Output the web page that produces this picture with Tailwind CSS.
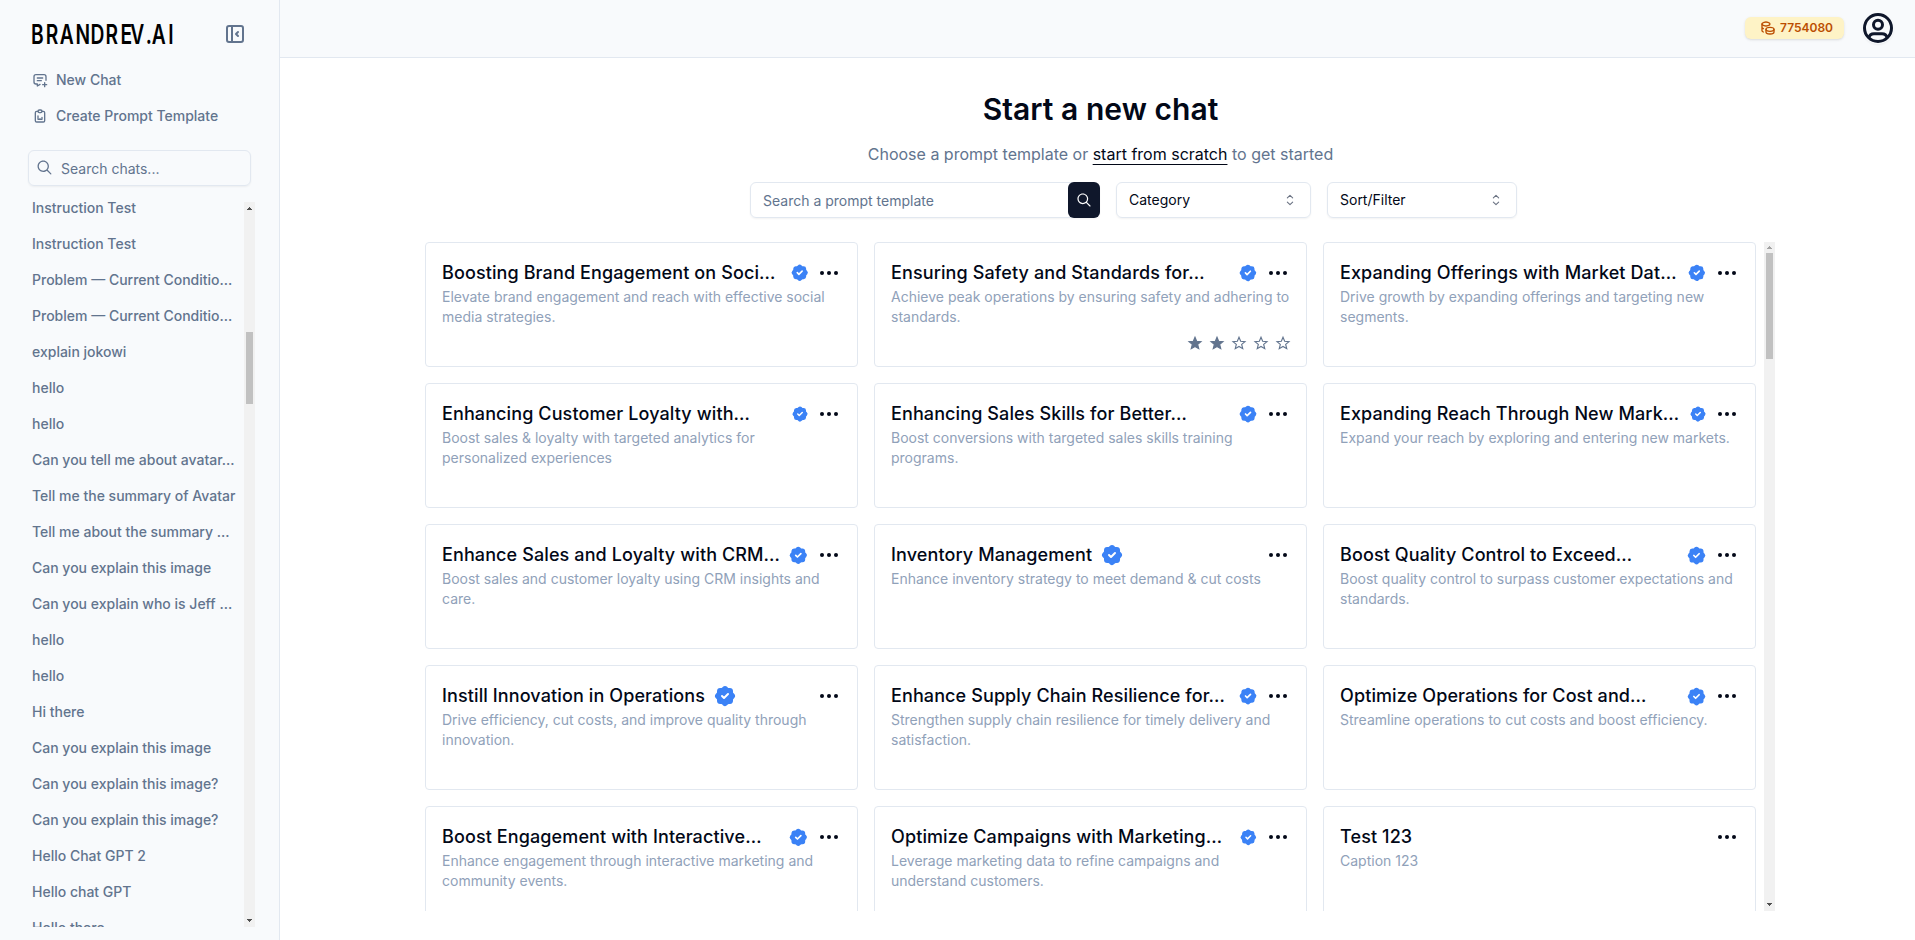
<!DOCTYPE html>
<html lang="en">
<head>
<meta charset="utf-8">
<title>BrandRev.AI</title>
<script src="https://cdn.jsdelivr.net/npm/@tailwindcss/browser@4"></script>
</head>
<body class="flex h-[940px] w-[1915px] overflow-hidden bg-white font-['Inter',sans-serif] text-[#020817]">
<svg class="hidden">
  <symbol id="search" viewBox="0 0 15 15"><path fill="currentColor" fill-rule="evenodd" d="M10 6.5C10 8.433 8.433 10 6.5 10C4.567 10 3 8.433 3 6.5C3 4.567 4.567 3 6.5 3C8.433 3 10 4.567 10 6.5ZM9.30884 10.0159C8.53901 10.6318 7.56251 11 6.5 11C4.01472 11 2 8.98528 2 6.5C2 4.01472 4.01472 2 6.5 2C8.98528 2 11 4.01472 11 6.5C11 7.56251 10.6318 8.53901 10.0159 9.30884L12.8536 12.1464C13.0488 12.3417 13.0488 12.6583 12.8536 12.8536C12.6583 13.0488 12.3417 13.0488 12.1464 12.8536L9.30884 10.0159Z"/></symbol>
  <symbol id="caret" viewBox="0 0 15 15"><path fill="none" stroke="currentColor" stroke-linecap="round" stroke-linejoin="round" d="M5 5.6L7.5 3.1L10 5.6M5 9.4L7.5 11.9L10 9.4"/></symbol>
  <symbol id="dots" viewBox="0 0 24 24"><g fill="currentColor"><circle cx="5" cy="12" r="2"/><circle cx="12" cy="12" r="2"/><circle cx="19" cy="12" r="2"/></g></symbol>
  <symbol id="badge" viewBox="0 0 24 24"><path fill="#3b82f6" d="M12.01 2.011a3.2 3.2 0 0 1 2.113 .797l.154 .145l.698 .698a1.2 1.2 0 0 0 .71 .341l.135 .008h1a3.2 3.2 0 0 1 3.195 3.018l.005 .182v1c0 .27 .092 .533 .258 .743l.09 .1l.697 .698a3.2 3.2 0 0 1 .147 4.382l-.145 .154l-.698 .698a1.2 1.2 0 0 0 -.341 .71l-.008 .135v1a3.2 3.2 0 0 1 -3.018 3.195l-.182 .005h-1a1.2 1.2 0 0 0 -.743 .258l-.1 .09l-.698 .697a3.2 3.2 0 0 1 -4.382 .147l-.154 -.145l-.698 -.698a1.2 1.2 0 0 0 -.71 -.341l-.135 -.008h-1a3.2 3.2 0 0 1 -3.195 -3.018l-.005 -.182v-1a1.2 1.2 0 0 0 -.258 -.743l-.09 -.1l-.697 -.698a3.2 3.2 0 0 1 -.147 -4.382l.145 -.154l.698 -.698a1.2 1.2 0 0 0 .341 -.71l.008 -.135v-1l.005 -.182a3.2 3.2 0 0 1 3.013 -3.013l.182 -.005h1a1.2 1.2 0 0 0 .743 -.258l.1 -.09l.698 -.697a3.2 3.2 0 0 1 2.269 -.944z"/><path fill="none" stroke="#fff" stroke-width="2" stroke-linecap="round" stroke-linejoin="round" d="M9 12l2 2l4-4"/></symbol>
  <symbol id="star" viewBox="0 0 24 24"><path stroke="currentColor" stroke-width="1.7" stroke-linejoin="miter" d="M12 3.4l2.5 6 6.5.5-5 4.2 1.6 6.4-5.6-3.4-5.6 3.4 1.6-6.4-5-4.2 6.5-.5z"/></symbol>
  <symbol id="up" viewBox="0 0 11 11"><path fill="currentColor" shape-rendering="crispEdges" d="M5 4h1v1h1v1h1v1H3V6h1V5h1z"/></symbol>
  <symbol id="down" viewBox="0 0 11 11"><path fill="currentColor" shape-rendering="crispEdges" d="M3 4h5v1H7v1H6v1H5V6H4V5H3z"/></symbol>
</svg>

<aside class="flex h-full w-[280px] shrink-0 flex-col border-r border-slate-200 bg-slate-50 text-sm text-slate-500">
  <div class="flex h-[62px] shrink-0 items-start justify-between pt-[21px] pr-8 pl-8">
    <svg class="h-8 w-[144px] overflow-visible text-black" viewBox="0 0 144 32"><g transform="scale(.7 1)"><text y="23" font-family="Inter" font-size="27.5" font-weight="600" fill="currentColor" x="-1.5 19.8 39.5 62 83.5 105 126.5 140.5 162.5 171 194.5">BRANDREV.AI</text></g></svg>
    <svg class="mt-px h-6 w-6" viewBox="0 0 24 24" fill="none" stroke="currentColor" stroke-width="2" stroke-linecap="round" stroke-linejoin="round"><rect x="4" y="4" width="16" height="16" rx="2"/><path d="M9 4v16M15 10l-2 2 2 2"/></svg>
  </div>
  <div class="flex h-9 shrink-0 items-center gap-2 pl-8 font-medium">
    <svg class="h-4 w-4" viewBox="0 0 24 24" fill="none" stroke="currentColor" stroke-width="2" stroke-linecap="round" stroke-linejoin="round"><path d="M8 9h8M8 13h6M12.01 18.6L8 21v-3H6a3 3 0 0 1-3-3V7a3 3 0 0 1 3-3h12a3 3 0 0 1 3 3v5.5M16 19h6M19 16v6"/></svg>
    <span>New Chat</span>
  </div>
  <div class="flex h-9 shrink-0 items-center gap-2 pl-8 font-medium">
    <svg class="h-4 w-4" viewBox="0 0 24 24" fill="none" stroke="currentColor" stroke-width="2" stroke-linecap="round" stroke-linejoin="round"><path d="M9 5H7a2 2 0 0 0-2 2v12a2 2 0 0 0 2 2h10a2 2 0 0 0 2-2V7a2 2 0 0 0-2-2h-2"/><rect x="9" y="3" width="6" height="4" rx="2"/><path d="M9 12v5M12 16v1M15 14v3M9 17h6"/></svg>
    <span>Create Prompt Template</span>
  </div>
  <div class="mt-4 ml-7 flex h-9 w-[223px] shrink-0 items-center rounded-md border border-slate-200 pl-1.5 shadow-xs">
    <svg class="-mt-0.5 h-[19px] w-[19px]"><use href="#search"/></svg>
    <span class="ml-[7px] pt-0.5">Search chats...</span>
  </div>
  <div class="mt-4 flex h-[725px] shrink-0 overflow-hidden pl-8">
    <div id="chats" class="-mt-3 w-[212px] shrink-0 font-medium"></div>
    <div class="flex h-full w-[11px] flex-col bg-[#f1f1f1] text-[#505050]">
      <svg class="mt-px h-[11px] w-[11px]"><use href="#up"/></svg>
      <div class="mx-auto mt-[118px] h-[72px] w-[7px] bg-[#c1c1c1]"></div>
      <svg class="mt-auto mb-px h-[11px] w-[11px]"><use href="#down"/></svg>
    </div>
  </div>
</aside>

<main class="flex min-w-0 flex-1 flex-col">
  <header class="flex h-[58px] shrink-0 items-center justify-end gap-[18px] border-b border-slate-200 bg-slate-50 pr-[21px]">
    <div class="mb-px flex h-[22px] w-[99px] items-center rounded-md bg-amber-100 pl-[15px] text-xs font-semibold text-amber-700 shadow-sm">
      <svg class="mr-1 h-4 w-4" viewBox="0 0 24 24" fill="none" stroke="currentColor" stroke-width="2" stroke-linecap="round" stroke-linejoin="round"><path d="M9 14c0 1.657 2.686 3 6 3s6-1.343 6-3-2.686-3-6-3-6 1.343-6 3z"/><path d="M9 14v4c0 1.656 2.686 3 6 3s6-1.344 6-3v-4M3 6c0 1.072 1.144 2.062 3 2.598s4.144.536 6 0c1.856-.536 3-1.526 3-2.598s-1.144-2.062-3-2.598-4.144-.536-6 0C4.144 3.938 3 4.928 3 6z"/><path d="M3 6v10c0 .888.772 1.45 2 2M3 11c0 .888.772 1.45 2 2"/></svg>
      <span>7754080</span>
    </div>
    <div class="mb-px h-8 w-8 rounded-full shadow-xs">
      <svg class="h-8 w-8 text-slate-900" viewBox="-16 -16 32 32" fill="none" stroke="currentColor" stroke-width="3"><circle r="13.5"/><circle cy="-3.2" r="4.5"/><path d="M-9.3 9.8C-8.4 6.6-6.6 5.7-4 5.7H4C6.6 5.7 8.4 6.6 9.3 9.8"/></svg>
    </div>
  </header>
  <section class="ml-[145px] flex w-[1351px] flex-col pt-[33px]">
    <h1 class="text-center text-3xl leading-9 font-semibold tracking-[0.05px]">Start a new chat</h1>
    <p class="mt-[15px] text-center text-base leading-6 text-slate-500">Choose a prompt template or <span class="text-[#020817] underline underline-offset-4">start from scratch</span> to get started</p>
    <div class="mt-4 ml-[325px] flex h-9 gap-4 text-sm">
      <div class="flex w-[350px] items-center justify-between rounded-md border border-slate-200 pl-3 text-slate-500 shadow-xs">
        <span class="pt-0.5">Search a prompt template</span>
        <div class="-my-px -mr-px flex h-9 w-8 items-center justify-center rounded-md bg-slate-900 text-white"><svg class="h-[18px] w-[18px]"><use href="#search"/></svg></div>
      </div>
      <div class="flex w-[195px] items-center justify-between rounded-md border border-slate-200 pr-3 pl-3 shadow-xs"><span>Category</span><svg class="h-4 w-4 text-gray-500"><use href="#caret"/></svg></div>
      <div class="flex w-[190px] items-center justify-between rounded-md border border-slate-200 pr-3 pl-3 shadow-xs"><span>Sort/Filter</span><svg class="h-4 w-4 text-gray-500"><use href="#caret"/></svg></div>
    </div>
    <div class="mt-6 flex h-[669px] gap-2 overflow-hidden">
      <div id="cards" class="grid w-[1331px] shrink-0 auto-rows-[125px] grid-cols-3 gap-4"></div>
      <div class="flex h-full w-[11px] flex-col bg-[#f1f1f1] text-[#505050]">
        <svg class="h-[11px] w-[11px] text-[#a3a3a3]"><use href="#up"/></svg>
        <div class="mx-auto h-[106px] w-[7px] bg-[#c1c1c1]"></div>
        <svg class="mt-auto mb-px h-[11px] w-[11px]"><use href="#down"/></svg>
      </div>
    </div>
  </section>
</main>

<script>
const chats = ["Instruction Test","Instruction Test","Problem — Current Conditio…","Problem — Current Conditio…","explain jokowi","hello","hello","Can you tell me about avatar…","Tell me the summary of Avatar","Tell me about the summary …","Can you explain this image","Can you explain who is Jeff …","hello","hello","Hi there","Can you explain this image","Can you explain this image?","Can you explain this image?","Hello Chat GPT 2","Hello chat GPT","Hello there"];
document.getElementById("chats").innerHTML = chats.map(c => `<div class="flex h-9 items-center whitespace-nowrap">${c}</div>`).join("");

// title, description, badge size (0 = none), badge right after the title, stars
const cards = [
 ["Boosting Brand Engagement on Soci…","Elevate brand engagement and reach with effective social media strategies.",19.4],
 ["Ensuring Safety and Standards for…","Achieve peak operations by ensuring safety and adhering to standards.",19.8,false,2],
 ["Expanding Offerings with Market Dat…","Drive growth by expanding offerings and targeting new segments.",19.6],
 ["Enhancing Customer Loyalty with…","Boost sales &amp; loyalty with targeted analytics for personalized experiences",18],
 ["Enhancing Sales Skills for Better…","Boost conversions with targeted sales skills training programs.",20],
 ["Expanding Reach Through New Mark…","Expand your reach by exploring and entering new markets.",18],
 ["Enhance Sales and Loyalty with CRM…","Boost sales and customer loyalty using CRM insights and care.",20.6],
 ["Inventory Management","Enhance inventory strategy to meet demand &amp; cut costs",24,true],
 ["Boost Quality Control to Exceed…","Boost quality control to surpass customer expectations and standards.",21],
 ["Instill Innovation in Operations","Drive efficiency, cut costs, and improve quality through innovation.",24,true],
 ["Enhance Supply Chain Resilience for…","Strengthen supply chain resilience for timely delivery and satisfaction.",20],
 ["Optimize Operations for Cost and…","Streamline operations to cut costs and boost efficiency.",21],
 ["Boost Engagement with Interactive…","Enhance engagement through interactive marketing and community events.",20.6],
 ["Optimize Campaigns with Marketing…","Leverage marketing data to refine campaigns and understand customers.",18.6],
 ["Test 123","Caption 123",0]
];
document.getElementById("cards").innerHTML = cards.map(([t,d,b,near,s]) => `
<article class="flex flex-col rounded-sm border border-slate-200 p-4">
  <div class="flex h-7 items-center gap-2">
    <div class="flex min-w-0 flex-1 items-center gap-2">
      <h2 class="${near ? "" : "min-w-0 flex-1"} whitespace-nowrap text-lg leading-7 font-medium tracking-[0.11px]">${t}</h2>
      ${b ? `<svg class="shrink-0" style="width:${b}px;height:${b}px"><use href="#badge"/></svg>` : ""}
    </div>
    <svg class="h-6 w-6 shrink-0"><use href="#dots"/></svg>
  </div>
  <p class="text-sm leading-5 text-slate-400">${d}</p>
  ${s ? `<div class="-mr-px -mb-px mt-auto flex justify-end gap-1.5 text-slate-500">${[0,1,2,3,4].map(i => `<svg class="h-4 w-4 ${i < s ? "fill-slate-500" : "fill-none"}"><use href="#star"/></svg>`).join("")}</div>` : ""}
</article>`).join("");
</script>
</body>
</html>
